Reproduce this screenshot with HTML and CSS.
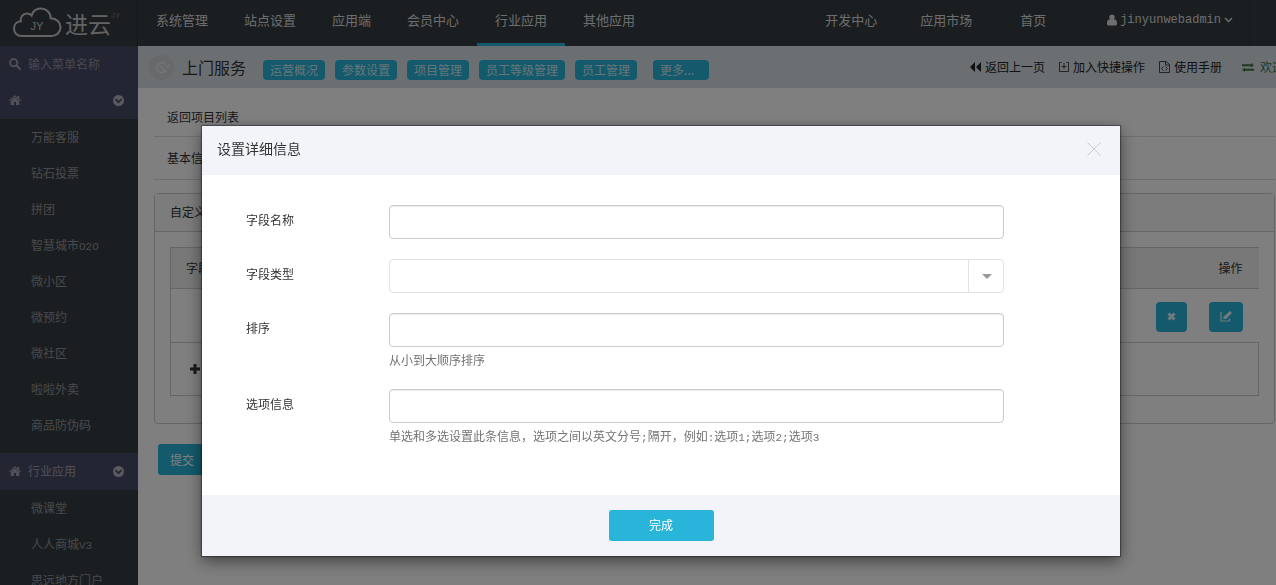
FILE: index.html
```html
<!DOCTYPE html>
<html lang="zh-CN">
<head>
<meta charset="utf-8">
<title>上门服务 - 进云</title>
<link rel="stylesheet" href="styles.css">
</head>
<body>
<svg class="defs" aria-hidden="true">
  <symbol id="home" viewBox="0 0 12 10"><path d="M6 .3 0 5.400l.7.800L6 1.800l5.300 4.400.7-.8-1.800-1.500V.8H8.600v1.700z"/><path d="M6 2.300 1.700 5.900V10H5V7h2v3h3.300V5.900z"/></symbol>
  <symbol id="chevron-circle" viewBox="0 0 12 12"><path fill-rule="evenodd" d="M6 0a6 6 0 1 0 0 12A6 6 0 0 0 6 0zM3.300 3.800 6 6.500l2.700-2.700 1.300 1.400L6 9.200 2 5.200z"/></symbol>
</svg>
<header class="topbar">
  <a class="logo" href="#" aria-label="进云">
    <svg class="cloud" viewBox="0 0 50 32" aria-hidden="true">
      <path d="M10 30C5 30 2 27 2 22.500c0-4 2.800-7 6.800-7.300C8 11 11 7.500 15 7.500c2 0 3.500.7 4.700 2C21 5 24.500 2.500 28.500 2.500c6 0 10 4 10.200 9.700 5.800.3 9.800 4 9.800 9 0 5-4 8.800-9 8.800z" fill="none" stroke="currentColor" stroke-width="2"/>
      <text x="25" y="24" text-anchor="middle" class="cloud-text">JY</text>
    </svg>
    <span class="logo-name">进云</span><sup class="logo-mark">JY</sup>
  </a>
  <nav class="nav">
    <a href="#">系统管理</a><a href="#">站点设置</a><a href="#">应用端</a><a href="#">会员中心</a><a href="#" class="active">行业应用</a><a href="#">其他应用</a>
  </nav>
  <nav class="nav-right">
    <a href="#">开发中心</a><a href="#">应用市场</a><a href="#" class="index">首页</a>
    <button class="user" type="button">
      <svg width="10" height="12" viewBox="0 0 11 12" aria-hidden="true"><path fill="currentColor" d="M5.500 0a3 3 0 0 1 2 5.300C9.500 5.500 11 6.800 11 9v1.500c0 .9-.6 1.500-1.500 1.500h-8C.6 12 0 11.400 0 10.500V9c0-2.200 1.500-3.500 3.500-3.700A3 3 0 0 1 5.500 0z"/></svg>
      <span>jinyunwebadmin</span>
      <svg width="9" height="6" viewBox="0 0 9 6" aria-hidden="true"><path d="M1 1l3.500 3.500L8 1" fill="none" stroke="currentColor" stroke-width="1.500"/></svg>
    </button>
  </nav>
</header>
<div class="page">
  <aside class="sidebar">
    <label class="search">
      <svg width="12" height="12" viewBox="0 0 12 12" aria-hidden="true"><circle cx="4.700" cy="4.700" r="3.600" fill="none" stroke="currentColor" stroke-width="2"/><path d="M7.500 7.500 11 11" stroke="currentColor" stroke-width="2.200" stroke-linecap="round"/></svg>
      <input type="text" placeholder="输入菜单名称" aria-label="输入菜单名称">
    </label>
    <button class="group" type="button" aria-label="展开菜单"><svg class="i-home"><use href="#home"/></svg><span></span><svg class="i-chev"><use href="#chevron-circle"/></svg></button>
    <ul class="menu">
      <li><a href="#">万能客服</a></li><li><a href="#">钻石投票</a></li><li><a href="#">拼团</a></li><li><a href="#">智慧城市<span class="latin">O2O</span></a></li><li><a href="#">微小区</a></li><li><a href="#">微预约</a></li><li><a href="#">微社区</a></li><li><a href="#">啦啦外卖</a></li><li><a href="#">商品防伪码</a></li>
    </ul>
    <button class="group" type="button"><svg class="i-home"><use href="#home"/></svg><span>行业应用</span><svg class="i-chev"><use href="#chevron-circle"/></svg></button>
    <ul class="menu">
      <li><a href="#">微课堂</a></li><li><a href="#">人人商城<span class="latin">V3</span></a></li><li><a href="#">思远地方门户</a></li>
    </ul>
  </aside>
  <div class="content">
    <div class="titlebar">
      <span class="plug"><svg width="18" height="18" viewBox="0 0 18 18" aria-hidden="true"><path d="M12.500 6.500A5 5 0 1 0 13 12M4 5.500 12 13M9.500 6l2.500-4M13 10l3.500-3" fill="none" stroke="currentColor" stroke-width="2"/></svg></span>
      <h1>上门服务</h1>
      <nav class="tags">
        <a href="#">运营概况</a><a href="#">参数设置</a><a href="#">项目管理</a><a href="#">员工等级管理</a><a href="#">员工管理</a><a href="#" class="more">更多...</a>
      </nav>
      <nav class="tools">
        <a href="#"><svg width="11" height="10" viewBox="0 0 11 10" aria-hidden="true"><path fill="currentColor" d="M5 0v10L0 5zM11 0v10L6 5z"/></svg>返回上一页</a>
        <a href="#"><svg width="10" height="10" viewBox="0 0 10 10" aria-hidden="true"><path d="M2.500.5h-2v9h9v-9h-2M5 1v6M2.500 4.500h5" fill="none" stroke="currentColor" opacity=".8"/></svg>加入快捷操作</a>
        <a href="#"><svg width="11" height="12" viewBox="0 0 11 12" aria-hidden="true"><path d="M.5.5h6.500l3.500 3v8H.5zM6.500.5v3.500h4M4.500 5.500 2.500 7.500l2 2M6.500 5.500l2 2-2 2" fill="none" stroke="currentColor" opacity=".8"/></svg>使用手册</a>
        <a href="#" class="welcome"><svg width="12" height="9" viewBox="0 0 12 9" aria-hidden="true"><path fill="currentColor" d="M0 1.300h9V0l3 2.200-3 2.200V3.200H0zM12 5.800H3V4.600L0 6.800 3 9V7.700h9z"/></svg>欢迎</a>
      </nav>
    </div>
    <main class="main">
      <div class="line first"><a href="#">返回项目列表</a></div>
      <div class="line">基本信息</div>
      <section class="panel">
        <h2>自定义字段</h2>
        <div class="panel-body">
          <table>
            <thead><tr><th>字段名称</th><th class="ops">操作</th></tr></thead>
            <tbody>
              <tr><td></td><td class="ops"><div class="btns">
                <button class="btn" type="button" aria-label="删除"><svg width="9" height="9" viewBox="0 0 9 9" aria-hidden="true"><path d="M1.500 1.500l6 6M7.500 1.500l-6 6" stroke="currentColor" stroke-width="3"/></svg></button>
                <button class="btn edit" type="button" aria-label="编辑"><svg width="12" height="11" viewBox="0 0 12 11" aria-hidden="true"><path d="M1 1v9h8.500V7.500" fill="none" stroke="currentColor" stroke-width="1.200"/><path d="M3.500 8V5.800L10 0l2 2L6 8z" fill="currentColor"/></svg></button>
              </div></td></tr>
              <tr class="add"><td colspan="2"><button type="button"><svg width="10" height="10" viewBox="0 0 10 10" aria-hidden="true"><path d="M5 0v10M0 5h10" stroke="currentColor" stroke-width="3"/></svg>添加字段</button></td></tr>
            </tbody>
          </table>
        </div>
      </section>
      <button class="submit" type="button">提交</button>
    </main>
  </div>
</div>
<div class="backdrop">
  <form class="modal" role="dialog" aria-labelledby="dlg">
    <div class="modal-head"><h2 id="dlg">设置详细信息</h2>
      <button class="close" type="button" aria-label="关闭"><svg width="14" height="14" viewBox="0 0 14 14" aria-hidden="true"><path d="M.5.5l13 13M13.500.5l-13 13" stroke="currentColor" fill="none"/></svg></button></div>
    <div class="modal-body">
      <div class="field"><label for="f1">字段名称</label><div class="control"><input id="f1" type="text"></div></div>
      <div class="field"><label for="f2">字段类型</label><div class="control select"><select id="f2"><option></option></select><span class="arrow"></span></div></div>
      <div class="field"><label for="f3">排序</label><div class="control"><input id="f3" type="text"><p>从小到大顺序排序</p></div></div>
      <div class="field"><label for="f4">选项信息</label><div class="control"><input id="f4" type="text"><p>单选和多选设置此条信息，选项之间以英文分号<span class="latin">;</span>隔开，例如<span class="latin">:</span>选项<span class="latin">1;</span>选项<span class="latin">2;</span>选项<span class="latin">3</span></p></div></div>
    </div>
    <div class="modal-foot"><button class="done" type="button">完成</button></div>
  </form>
</div>
</body>
</html>
```
FILE: styles.css
```css
* { box-sizing: border-box; }
body {
  margin: 0; height: 100vh; overflow: hidden; display: flex; flex-direction: column;
  font: 12px/18px "Noto Sans CJK SC", sans-serif; color: #333; background: #fff;
}
a { color: inherit; text-decoration: none; }
button, input, select { font: inherit; color: inherit; }
button { border: 0; padding: 0; background: none; cursor: pointer; }
h1, h2, p, ul { margin: 0; padding: 0; font-weight: 400; }
ul { list-style: none; }
svg { flex: none; }
.defs { position: absolute; width: 0; height: 0; }
.latin { font-family: "Liberation Mono", monospace; font-size: 11px; line-height: 1; }

.topbar { display: flex; flex: none; height: 46px; background: #373d41; color: #d8dadb; font-size: 13px; }
.logo { display: flex; width: 138px; padding: 6px 0 0 12px; border-right: 1px solid #2b3033; color: #c4c6c8; }
.cloud { width: 50px; height: 32px; }
.cloud-text { font: 11px "Liberation Sans", sans-serif; fill: currentColor; }
.logo-name { margin-left: 3px; font-size: 23px; line-height: 34px; }
.logo-mark { font: 8px/20px "Liberation Sans", sans-serif; opacity: .4; }
.nav { display: flex; }
.nav a { padding: 0 18px; line-height: 40px; border-bottom: 3px solid transparent; }
.nav .active { border-color: #28b5d9; }
.nav-right { display: flex; gap: 43px; margin: 0 26px 0 auto; padding-right: 16px; line-height: 40px; border-right: 1px solid #2f3538; }
.index { margin-left: 5px; }
.user { display: flex; align-items: center; gap: 3px; height: 40px; margin-left: 18px; }
.user span { font: 12px "Liberation Mono", monospace; }

.page { display: flex; flex: 1; min-height: 0; }
.sidebar { width: 138px; flex: none; overflow: hidden; background: #373d41; color: #8f9498; }
.search { display: flex; align-items: center; gap: 7px; height: 36px; padding-left: 9px; background: #484a64; color: #9a9cac; }
.search input { width: 100px; border: 0; padding: 0; background: none; outline: 0; }
.search input::placeholder { color: #8f91a2; opacity: 1; }
.group { display: flex; align-items: center; gap: 7px; width: 100%; height: 37px; padding: 0 14px 1px 9px; background: #484a64; color: #9fa1b0; text-align: left; }
.group span { flex: 1; }
.i-home { width: 12px; height: 10px; fill: currentColor; }
.i-chev { width: 11px; height: 11px; fill: #b4b6c0; }
.menu { padding-bottom: 10px; }
.menu a { display: block; padding-left: 31px; line-height: 36px; }

.content { flex: 1; min-width: 0; overflow: hidden; }
.titlebar { display: flex; align-items: center; height: 42px; padding-left: 11px; background: #d6dee4; white-space: nowrap; overflow: hidden; }
.plug { display: grid; place-items: center; width: 25px; height: 25px; border-radius: 50%; background: #ced3d6; color: #e2e5e7; }
.titlebar h1 { margin: 0 17px 0 8px; font-size: 16px; line-height: 24px; color: #333; }
.tags { display: flex; gap: 10px; padding-top: 6px; }
.tags a { padding: 0 7px; line-height: 20px; border-radius: 4px; background: #28b5d9; color: #d0eaf2; }
.tags .more { width: 56px; margin-left: 6px; }
.tools { display: flex; gap: 14px; margin: 0 -8px 0 auto; color: #222; }
.tools a { display: flex; align-items: center; gap: 4px; }
.tools .welcome { color: #3c763d; margin-left: 6px; gap: 6px; }

.main { padding: 14px 1px 0 16px; }
.line { padding: 12px 13px; border-bottom: 1px solid #ddd; }
.line.first { padding: 6px 13px 10px; }
.panel { margin-top: 13px; border: 1px solid #ccc; border-radius: 4px; }
.panel h2 { padding: 9px 15px 10px; font-size: 12px; line-height: 18px; background: #f8f8f8; border-bottom: 1px solid #ccc; }
.panel-body { padding: 15px 15px 27px; }
table { width: 100%; border-collapse: collapse; }
th, td { border: 0 solid #ccc; height: 41px; padding: 0 16px 0 15px; font-weight: 400; text-align: left; }
th { background: #f0f0f0; border-width: 1px 0; }
th:first-child, td:first-child { border-left-width: 1px; }
td { height: 54px; padding-top: 2px; }
.ops { text-align: right; }
.btns { display: flex; justify-content: flex-end; gap: 22px; }
.btn { display: grid; place-items: center; width: 31px; height: 30px; border-radius: 4px; background: #28b5d9; color: #e2f4f9; }
.edit { width: 34px; }
.add td { border-width: 1px; height: 53px; padding: 0 19px; }
.add button { display: flex; align-items: center; gap: 6px; }
.submit { margin: 20px 4px; padding: 0 12px; height: 31px; border-radius: 3px; background: #28b5d9; color: #fff; }

.backdrop { position: fixed; inset: 0; padding: 126px 156px 0 202px; background: rgba(0, 0, 0, .5); }
.modal { background: #fff; box-shadow: 0 0 1px 1px rgba(0, 0, 0, .35), 0 5px 15px rgba(0, 0, 0, .5); }
.modal-head { display: flex; justify-content: space-between; height: 49px; padding: 12px 19px 0 15px; background: #f3f4f9; }
.modal-head h2 { font-size: 14px; line-height: 20px; color: #333; }
.close { display: flex; align-self: flex-start; padding-top: 4px; color: #ccc; }
.modal-body { display: grid; gap: 20px; padding: 30px 116px 50px 44px; }
.field { display: grid; grid-template-columns: 143px 1fr; align-items: start; }
.field label { padding-top: 6px; }
.control input, .control select { display: block; width: 100%; height: 34px; padding: 6px 12px; border: 1px solid #ccc; border-radius: 4px; background: #fff; box-shadow: inset 0 1px 1px rgba(0, 0, 0, .075); }
.control p { padding-top: 4px; line-height: 18px; color: #737373; }
.select { display: grid; }
.select > * { grid-area: 1 / 1; }
.control select { appearance: none; border-color: #e2e2e4; box-shadow: none; }
.arrow { justify-self: end; display: grid; place-items: center; width: 36px; height: 32px; margin-top: 1px; border-left: 1px solid #e2e2e4; pointer-events: none; }
.arrow::before { content: ""; border: 5px solid transparent; border-top-color: #999; border-bottom: 0; }
.modal-foot { display: flex; justify-content: center; padding: 15px; background: #f3f4f9; }
.done { width: 105px; height: 31px; padding-bottom: 2px; border-radius: 3px; background: #28b5d9; color: #fff; }
```
